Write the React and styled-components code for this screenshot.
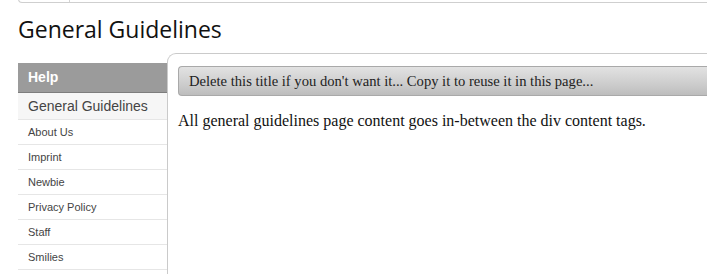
import React from "react";
import styled, { createGlobalStyle } from "styled-components";

const GlobalStyle = createGlobalStyle`
  html, body {
    margin: 0;
    padding: 0;
    background: #fff;
    overflow: hidden;
  }
  body {
    font-family: "Liberation Sans", Tahoma, sans-serif;
  }
`;

const Page = styled.div`
  width: 707px;
  height: 274px;
  padding-left: 18px;
  box-sizing: border-box;
  overflow: hidden;
`;

const TopBar = styled.div`
  display: flex;
  height: 3px;
  margin-top: -1px;
  border: 1px solid #cfcfcf;
  border-top: none;
  border-bottom-left-radius: 5px;
  margin-right: -10px;
`;

const TopTab = styled.div`
  width: 50px;
  border-right: 1px solid #d4d4d4;
`;

const Title = styled.h1`
  margin: 11px 0 0;
  font-family: "Open Sans", sans-serif;
  font-weight: 400;
  font-size: 23px;
  line-height: 31px;
  color: #111;
`;

const Body = styled.div`
  display: flex;
  align-items: flex-start;
  margin-top: 8px;
`;

const Sidebar = styled.nav`
  width: 149px;
  flex-shrink: 0;
  margin-top: 10px;
`;

const SideHead = styled.div`
  height: 29px;
  line-height: 29px;
  padding-left: 10px;
  background: #9b9b9b;
  border-bottom: 1px solid #7d7d7d;
  color: #fff;
  font-weight: bold;
  font-size: 14px;
`;

const SideItem = styled.div`
  height: ${(p) => (p.$main ? "26px" : "24px")};
  line-height: ${(p) => (p.$main ? "26px" : "24px")};
  padding-left: 10px;
  border-bottom: 1px solid #e6e6e6;
  color: #444;
  font-size: ${(p) => (p.$main ? "14px" : "11px")};
  background: ${(p) => (p.$main ? "#f6f6f6" : "#fff")};
`;

const Panel = styled.main`
  flex: 1;
  height: 230px;
  margin-right: -10px;
  border: 1px solid #cacaca;
  border-right: none;
  border-bottom: none;
  border-top-left-radius: 9px;
  padding: 12px 0 0 10px;
  font-family: "Liberation Serif", Georgia, serif;
  color: #222;
`;

const PanelTitle = styled.div`
  height: 28px;
  line-height: 28px;
  padding-left: 10px;
  border: 1px solid #a9a9a9;
  border-right: none;
  border-radius: 4px 0 0 4px;
  background: linear-gradient(#e2e2e2, #cdcdcd 60%, #bdbdbd);
  font-size: 14.6px;
  color: #222;
`;

const Text = styled.p`
  margin: 16px 0 0;
  font-size: 16px;
  color: #111;
`;

const links = ["About Us", "Imprint", "Newbie", "Privacy Policy", "Staff", "Smilies"];

export default function App() {
  return (
    <>
      <GlobalStyle />
      <Page>
        <TopBar>
          <TopTab />
        </TopBar>
        <Title>General Guidelines</Title>
        <Body>
          <Sidebar>
            <SideHead>Help</SideHead>
            <SideItem $main>General Guidelines</SideItem>
            {links.map((l) => (
              <SideItem key={l}>{l}</SideItem>
            ))}
          </Sidebar>
          <Panel>
            <PanelTitle>
              Delete this title if you don't want it... Copy it to reuse it in this page...
            </PanelTitle>
            <Text>All general guidelines page content goes in-between the div content tags.</Text>
          </Panel>
        </Body>
      </Page>
    </>
  );
}
